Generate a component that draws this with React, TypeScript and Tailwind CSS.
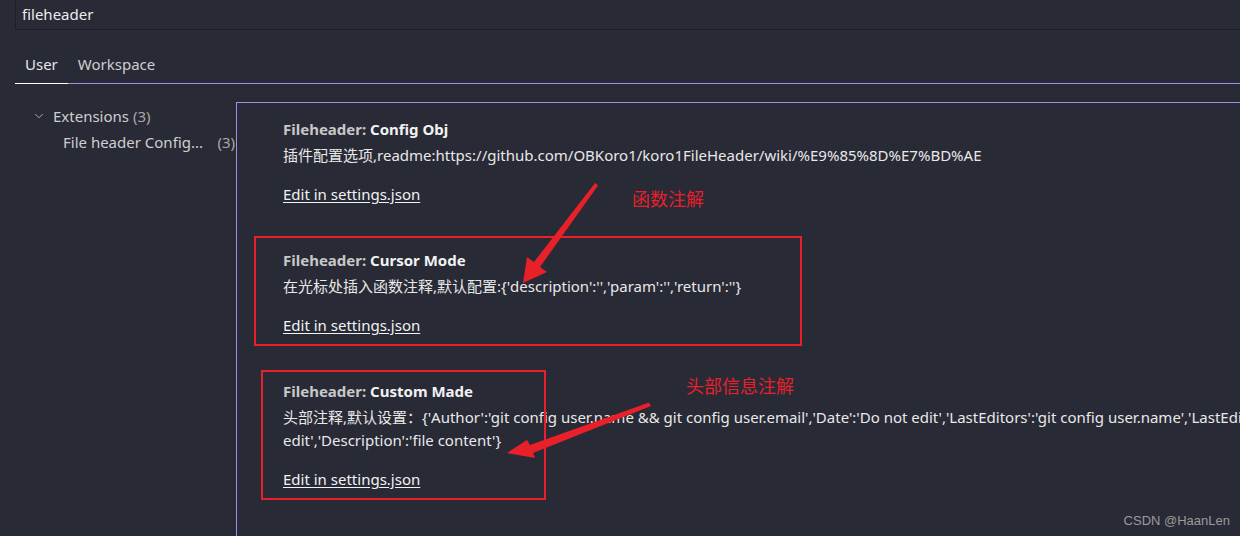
import { ChevronDown } from 'lucide-react'

type Setting = {
  id: string
  category: string
  name: string
  lines: string[]
}

const settings: Setting[] = [
  {
    id: 'configObj',
    category: 'Fileheader: ',
    name: 'Config Obj',
    lines: ['插件配置选项,readme:https://github.com/OBKoro1/koro1FileHeader/wiki/%E9%85%8D%E7%BD%AE'],
  },
  {
    id: 'cursorMode',
    category: 'Fileheader: ',
    name: 'Cursor Mode',
    lines: ["在光标处插入函数注释,默认配置:{'description':'','param':'','return':''}"],
  },
  {
    id: 'customMade',
    category: 'Fileheader: ',
    name: 'Custom Made',
    lines: [
      "头部注释,默认设置：{'Author':'git config user.name && git config user.email','Date':'Do not edit','LastEditors':'git config user.name','LastEditTime':'Do not",
      "edit','Description':'file content'}",
    ],
  },
]

const font = {
  fontFamily: '"Noto Sans", "Noto Sans CJK SC", sans-serif',
}

function SettingItem({ s }: { s: Setting }) {
  return (
    <div className="pt-[15px] pb-[29px]">
      <div className="h-[22px] leading-[22px] text-[15px] font-bold whitespace-nowrap">
        <span className="text-[#c8c8c8]">{s.category}</span>
        <span className="text-[#f2f2f2]">{s.name}</span>
      </div>
      <div className="mt-[4px] text-[15px] text-[#e8e8e8]">
        {s.lines.map((l, i) => (
          <div key={i} className="h-[23px] leading-[23px] whitespace-nowrap">
            {l}
          </div>
        ))}
      </div>
      <div className="mt-[16px] h-[22px] leading-[22px] text-[15px]">
        <span className="underline underline-offset-2 text-[#f2f2f2]">Edit in settings.json</span>
      </div>
    </div>
  )
}

export default function App() {
  return (
    <div
      className="relative w-[1240px] h-[536px] overflow-hidden bg-[#282a36] text-[#e6e6e6]"
      style={font}
    >
      {/* 検索欄 */}
      <div className="pl-[15px]">
        <div className="h-[30px] border-l border-b border-[#1d1e27] pl-[6px] flex items-center text-[15px] text-[#ececec]">
          fileheader
        </div>
      </div>

      {/* タブ */}
      <div className="mt-[15px] ml-[15px] flex border-b border-[#a48ee5] h-[39px] text-[15px]">
        <div className="px-[10px] flex items-center border-b border-white -mb-px text-[#e6e6e6]">User</div>
        <div className="px-[10px] flex items-center text-[#cfcfcf]">Workspace</div>
      </div>

      <div className="flex">
        {/* ツリー */}
        <div className="w-[236px] shrink-0 pt-[19px] text-[15px]">
          <div className="h-[26px] flex items-center pl-[32px] text-[#cfcfcf]">
            <ChevronDown size={14} strokeWidth={1.5} className="mr-[7px] text-[#bdbdbd]" />
            <span>Extensions</span>
            <span className="ml-[4px] text-[#a8a8a8]">(3)</span>
          </div>
          <div className="h-[26px] flex items-center pl-[63px] pr-[1px] text-[#cfcfcf]">
            <span className="flex-1 whitespace-nowrap">File header Config...</span>
            <span className="text-[#a8a8a8]">(3)</span>
          </div>
        </div>

        {/* 設定一覧 */}
        <div className="mt-[18px] flex-1 min-w-0 h-[440px] overflow-hidden border-t border-l border-[#a48ee5] pl-[46px]">
          {settings.map(s => (
            <SettingItem key={s.id} s={s} />
          ))}
        </div>
      </div>

      {/* 注釈 */}
      <div className="absolute left-[254px] top-[236px] w-[548px] h-[110px] border-2 border-[#e8202a]" />
      <div className="absolute left-[261px] top-[370px] w-[285px] h-[130px] border-2 border-[#e8202a]" />
      <div className="absolute left-[632px] top-[187px] text-[18px] leading-[24px] text-[#e8202a]">函数注解</div>
      <div className="absolute left-[686px] top-[374px] text-[18px] leading-[24px] text-[#e8202a]">头部信息注解</div>
      <svg className="absolute left-0 top-0 pointer-events-none" width="1240" height="536">
        <polygon
          points="595,183 598,185.5 540,267 547,272 523,283 527,257 534,262"
          fill="#e8202a"
        />
        <polygon
          points="649,402.5 651,406 533,453 535,458 507,453 527,440 530,445"
          fill="#e8202a"
        />
      </svg>

      <div className="absolute right-[10px] bottom-[6px] text-[13px] text-[#9a9a9a]" style={{ fontFamily: '"Liberation Sans", sans-serif' }}>
        CSDN @HaanLen
      </div>
    </div>
  )
}
